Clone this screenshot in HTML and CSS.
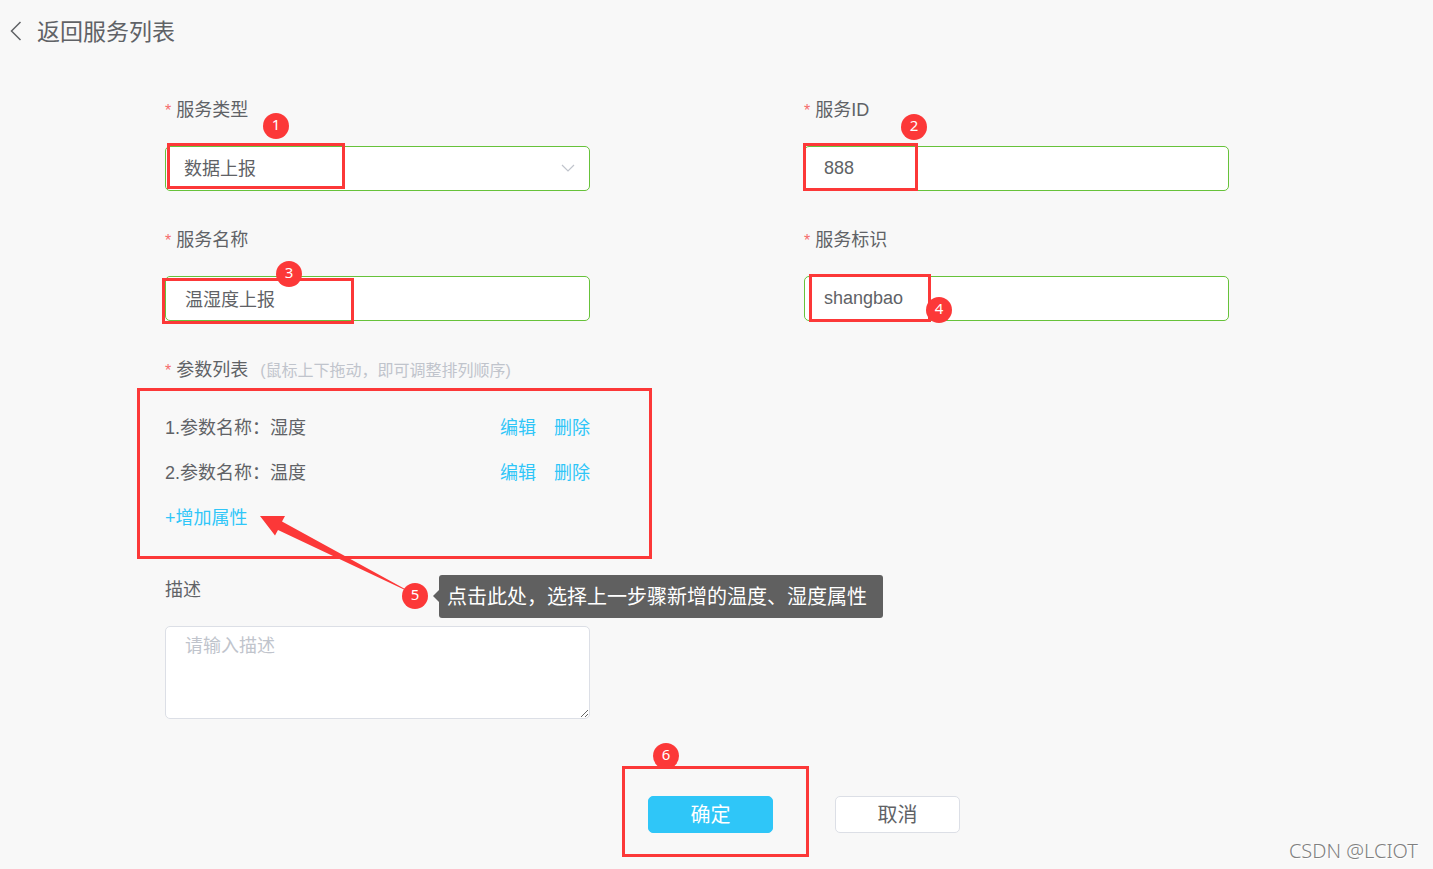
FILE: index.html
```html
<!DOCTYPE html>
<html lang="zh-CN">
<head>
<meta charset="utf-8">
<meta name="viewport" content="width=device-width, initial-scale=1">
<title>服务列表</title>
<link rel="stylesheet" href="styles.css">
</head>
<body>
<header class="header">
  <a class="back" href="#">
    <svg class="back-icon" width="12" height="20" viewBox="0 0 12 20" aria-hidden="true"><path d="M10.500 1 1.500 10l9 9" fill="none" stroke="currentColor" stroke-width="1.500"/></svg>
    <span>返回服务列表</span>
  </a>
</header>
<form class="form">
  <div class="fields">
    <div class="field">
      <label class="label required" for="type">服务类型</label>
      <div class="control">
        <select class="input" id="type"><option>数据上报</option></select>
        <svg class="chevron" width="14" height="8" viewBox="0 0 14 8" aria-hidden="true"><path d="M1 1l6 6 6-6" fill="none" stroke="currentColor" stroke-width="1.200"/></svg>
        <span class="mark mark-type"></span><span class="badge badge-type">1</span>
      </div>
    </div>
    <div class="field">
      <label class="label required" for="sid">服务ID</label>
      <div class="control">
        <input class="input" id="sid" type="text" value="888">
        <span class="mark mark-id"></span><span class="badge badge-id">2</span>
      </div>
    </div>
    <div class="field">
      <label class="label required" for="name">服务名称</label>
      <div class="control">
        <input class="input" id="name" type="text" value="温湿度上报">
        <span class="mark mark-name"></span><span class="badge badge-name">3</span>
      </div>
    </div>
    <div class="field">
      <label class="label required" for="key">服务标识</label>
      <div class="control">
        <input class="input" id="key" type="text" value="shangbao">
        <span class="mark mark-key"></span><span class="badge badge-key">4</span>
      </div>
    </div>
    <div class="field field-start">
      <div class="label required">参数列表<span class="hint">(鼠标上下拖动，即可调整排列顺序)</span></div>
      <div class="control">
        <ol class="params">
          <li class="param"><span>1.参数名称：湿度</span><span class="links"><a href="#">编辑</a><a href="#">删除</a></span></li>
          <li class="param"><span>2.参数名称：温度</span><span class="links"><a href="#">编辑</a><a href="#">删除</a></span></li>
        </ol>
        <button class="add" type="button">+增加属性</button>
        <span class="mark mark-params"></span>
        <svg class="arrow" width="146" height="74" viewBox="0 0 146 74" aria-hidden="true"><path d="M0 0H25L22 5.500 145 73 144 73.500 18 14 15 19.500Z" fill="#fc3838"/></svg>
        <span class="badge badge-params">5</span>
        <span class="tip">点击此处，选择上一步骤新增的温度、湿度属性</span>
      </div>
    </div>
    <div class="field field-start">
      <label class="label" for="desc">描述</label>
      <textarea class="input area" id="desc" placeholder="请输入描述"></textarea>
    </div>
  </div>
  <div class="actions">
    <div class="control">
      <button class="button primary" type="button">确定</button>
      <span class="badge badge-submit">6</span><span class="mark mark-submit"></span>
    </div>
    <button class="button" type="button">取消</button>
  </div>
</form>
<div class="watermark">CSDN @LCIOT</div>
</body>
</html>
```
FILE: styles.css
```css
* { box-sizing: border-box; }

body {
  margin: 0;
  position: relative;
  min-height: 100vh;
  background: #f8f8f8;
  color: #606266;
  font-family: "Liberation Sans", "Noto Sans CJK SC", sans-serif;
  font-size: 18px;
  line-height: 24px;
}

a { color: #2fc6f8; text-decoration: none; }

.header { padding: 16px 10px; }

.back {
  display: inline-flex;
  align-items: center;
  gap: 15px;
  color: #606266;
  font-size: 23px;
  line-height: 32px;
}

.back-icon { margin-bottom: 2px; }

.form { padding-top: 34px; }

.fields {
  display: grid;
  grid-template-columns: 1fr 1fr;
  gap: 37px 214px;
  padding: 0 204px 0 165px;
}

.field { display: flex; flex-direction: column; gap: 24px; }
.field-start { grid-column: 1; }

.label { display: block; white-space: nowrap; }
.required::before {
  content: "*";
  margin-right: 5px;
  color: #f56c6c;
  font-size: 16px;
  line-height: 1;
}

.hint { margin-left: 12px; color: #c0c4cc; font-size: 16px; line-height: 1; }

.control { position: relative; }

.input {
  display: block;
  width: 100%;
  height: 45px;
  padding: 0 19px;
  border: 1px solid #67c23a;
  border-radius: 5px;
  background: #fff;
  color: #606266;
  font: inherit;
  outline: none;
  appearance: none;
}
select.input { padding: 0 18px; border-color: #67c23a; }
input.input { padding-bottom: 1px; }

.area {
  height: 93px;
  padding: 7px 19px;
  border-color: #dcdfe6;
  resize: vertical;
}
.area::placeholder { color: #c0c4cc; }

.chevron {
  position: absolute;
  top: 18px;
  right: 15px;
  color: #c0c4cc;
}

.params { margin: 0; padding: 0; list-style: none; }
.param { display: flex; justify-content: space-between; line-height: 45px; }
.links { display: flex; gap: 18px; }

.add {
  display: block;
  padding: 0;
  border: 0;
  background: none;
  color: #2fc6f8;
  font: inherit;
  line-height: 45px;
}

.actions {
  display: flex;
  justify-content: center;
  gap: 62px;
  padding: 77px 0 36px 175px;
}

.button {
  display: block;
  width: 125px;
  height: 37px;
  padding: 0;
  border: 1px solid #dcdfe6;
  border-radius: 5px;
  background: #fff;
  color: #606266;
  font: inherit;
  font-size: 20px;
}
.primary { border-color: #2fc6f8; background: #2fc6f8; color: #fff; }

/* Tutorial callouts laid over the form */
.mark { position: absolute; border: 3px solid #fc3838; pointer-events: none; }
.mark-type { left: 2px; top: -3px; width: 178px; height: 46px; }
.mark-id { left: -1px; top: -3px; width: 115px; height: 48px; }
.mark-name { left: -3px; top: 2px; width: 192px; height: 46px; }
.mark-key { left: 5px; top: -2px; width: 122px; height: 48px; }
.mark-params { inset: -18px -62px -18px -28px; }
.mark-submit { inset: -30px -36px -24px -26px; }

.badge {
  position: absolute;
  width: 26px;
  height: 26px;
  border-radius: 50%;
  background: #fc3838;
  color: #fff;
  font-family: "Noto Sans", sans-serif;
  font-size: 15px;
  line-height: 23px;
  text-align: center;
}
.badge-type { left: 98px; top: -33px; }
.badge-id { left: 97px; top: -32px; }
.badge-name { left: 111px; top: -15px; }
.badge-key { left: 122px; top: 21px; }
.badge-params { left: 237px; top: 177px; }
.badge-submit { left: 5px; top: -53px; }

.arrow { position: absolute; left: 95px; top: 110px; }

.tip {
  position: absolute;
  left: 274px;
  top: 169px;
  padding: 2px 16px 0 8px;
  border-radius: 3px;
  background: #606060;
  color: #fff;
  font-size: 20px;
  line-height: 41px;
  white-space: nowrap;
}
.tip::before {
  content: "";
  position: absolute;
  left: -6px;
  top: 15px;
  border: solid transparent;
  border-width: 6px 6px 6px 0;
  border-right-color: #606060;
}

.watermark {
  position: absolute;
  right: 15px;
  bottom: 6px;
  color: #808080;
  font-family: "Noto Sans", sans-serif;
  font-size: 20px;
  font-weight: 300;
  text-shadow: 1px 1px 0 #fff;
}
```
